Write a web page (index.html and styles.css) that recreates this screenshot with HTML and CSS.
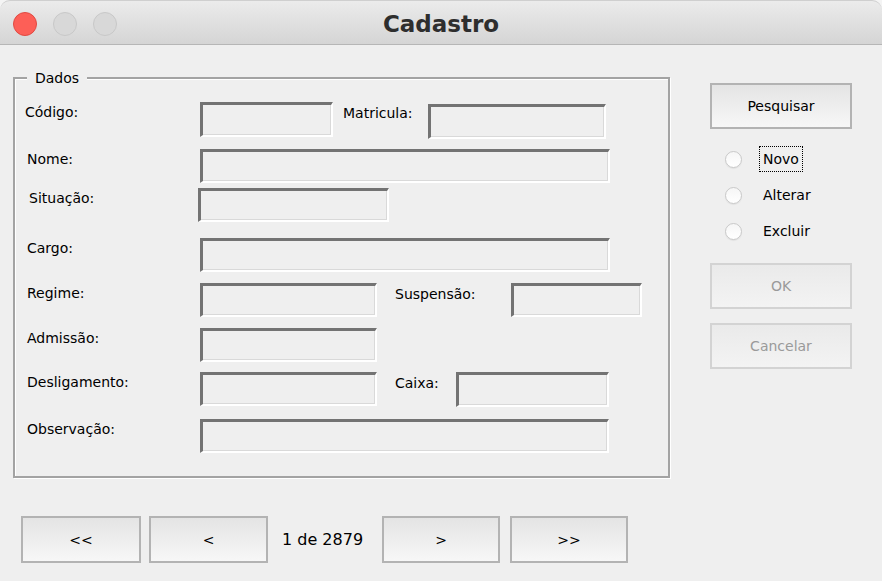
FILE: index.html
```html
<!DOCTYPE html>
<html lang="pt">
<head>
<meta charset="utf-8">
<title>Cadastro</title>
<link rel="stylesheet" href="styles.css">
</head>
<body>
<div class="window">
  <header class="titlebar">
    <div class="lights">
      <span class="light light-close"></span>
      <span class="light"></span>
      <span class="light"></span>
    </div>
    <h1 class="title">Cadastro</h1>
    <div class="spacer"></div>
  </header>

  <main class="content">
    <div class="top">
      <section class="group">
        <span class="legend">Dados</span>
        <div class="form">
          <div class="row">
            <span class="lbl lbl-codigo">Código:</span>
            <span class="field f-codigo tall"></span>
            <span class="lbl-inline l-matricula">Matricula:</span>
            <span class="field f-matricula tall down2"></span>
          </div>
          <div class="row">
            <span class="lbl">Nome:</span>
            <span class="field f-wide"></span>
          </div>
          <div class="row">
            <span class="lbl lbl-situacao">Situação:</span>
            <span class="field f-situacao"></span>
          </div>
          <div class="row">
            <span class="lbl">Cargo:</span>
            <span class="field f-wide"></span>
          </div>
          <div class="row">
            <span class="lbl">Regime:</span>
            <span class="field f-short"></span>
            <span class="lbl-inline l-suspensao">Suspensão:</span>
            <span class="field f-suspensao"></span>
          </div>
          <div class="row">
            <span class="lbl">Admissão:</span>
            <span class="field f-short"></span>
          </div>
          <div class="row">
            <span class="lbl">Desligamento:</span>
            <span class="field f-short"></span>
            <span class="lbl-inline l-caixa">Caixa:</span>
            <span class="field f-caixa tall"></span>
          </div>
          <div class="row">
            <span class="lbl">Observação:</span>
            <span class="field f-obs"></span>
          </div>
        </div>
      </section>

      <aside class="side">
        <div class="btn">Pesquisar</div>
        <div class="radios">
          <div class="radio-row"><span class="radio"></span><span class="radio-label focus">Novo</span></div>
          <div class="radio-row"><span class="radio"></span><span class="radio-label">Alterar</span></div>
          <div class="radio-row"><span class="radio"></span><span class="radio-label">Excluir</span></div>
        </div>
        <div class="btn btn-disabled btn-ok">OK</div>
        <div class="btn btn-disabled btn-cancel">Cancelar</div>
      </aside>
    </div>

    <nav class="pager">
      <div class="btn pbtn p-first">&lt;&lt;</div>
      <div class="btn pbtn p-prev">&lt;</div>
      <span class="count">1 de 2879</span>
      <div class="btn pbtn p-next">&gt;</div>
      <div class="btn pbtn p-last">&gt;&gt;</div>
    </nav>
  </main>
</div>
</body>
</html>
```

FILE: styles.css
```css
html, body {
  margin: 0;
  padding: 0;
  background: #f4f4f4;
}

body {
  width: 882px;
  height: 581px;
  overflow: hidden;
  font-family: "DejaVu Sans", Verdana, sans-serif;
  font-size: 14px;
  color: #000;
}

.window {
  width: 882px;
  height: 581px;
  background: #efefef;
  border-radius: 10px 10px 0 0;
}

/* Title bar */
.titlebar {
  box-sizing: border-box;
  height: 45px;
  padding-top: 2px;
  display: grid;
  grid-template-columns: 1fr auto 1fr;
  align-items: center;
  background: linear-gradient(#ebebeb, #d5d5d5);
  border-top: 1px solid #cfcfcf;
  border-bottom: 1px solid #b6b6b6;
  border-radius: 10px 10px 0 0;
}

.lights {
  display: flex;
  gap: 16px;
  padding-left: 13px;
}

.light {
  box-sizing: border-box;
  width: 24px;
  height: 24px;
  border-radius: 50%;
  background: #d8d8d8;
  border: 1px solid #c8c8c8;
}

.light-close {
  background: #fd5f57;
  border-color: #e04a42;
}

.title {
  margin: 0;
  font-family: "DejaVu Sans", Verdana, sans-serif;
  font-weight: bold;
  font-size: 23px;
  line-height: 28px;
  color: #2e2e2e;
}

/* Content */
.content {
  padding: 32px 0 0 13px;
}

.top {
  display: flex;
  align-items: flex-start;
}

.group {
  box-sizing: border-box;
  width: 657px;
  height: 401px;
  border: 2px solid #a3a3a3;
  box-shadow: 1px 1px 0 #fff, inset 1px 1px 0 #fff;
  display: flex;
  flex-direction: column;
  align-items: flex-start;
}

.legend {
  margin-top: -10px;
  margin-left: 12px;
  padding: 0 8px;
  line-height: 18px;
  background: #efefef;
}

.form {
  margin-top: 15px;
  display: grid;
  grid-template-rows: 47px 39px 50px 45px 45px 44px 47px 35px;
}

.row {
  display: flex;
  align-items: flex-start;
}

.lbl {
  box-sizing: border-box;
  width: 185px;
  padding-left: 12px;
  margin-top: 1px;
  line-height: 18px;
}

.lbl-codigo { padding-left: 10px; }
.lbl-situacao { width: 183px; padding-left: 14px; }

.lbl-inline {
  box-sizing: border-box;
  margin-top: 2px;
  line-height: 18px;
}

.l-matricula { margin-left: 10px; width: 85px; }
.l-suspensao { margin-left: 18px; width: 116px; }
.l-caixa { margin-left: 18px; width: 61px; }

.field {
  display: block;
  box-sizing: border-box;
  height: 34px;
  background: #efefef;
  border-style: solid;
  border-width: 3px 2px 2px 3px;
  border-color: #737373 #fff #fff #737373;
  box-shadow: inset -1px -1px 0 #d9d9d9;
}

.tall { height: 35px; }
.down2 { margin-top: 2px; }

.f-codigo { width: 133px; }
.f-matricula { width: 178px; }
.f-wide { width: 410px; }
.f-situacao { width: 191px; }
.f-short { width: 177px; }
.f-suspensao { width: 131px; }
.f-caixa { width: 153px; }
.f-obs { width: 409px; }

/* Side panel */
.side {
  margin-left: 40px;
  margin-top: 6px;
  width: 142px;
  display: flex;
  flex-direction: column;
}

.btn {
  box-sizing: border-box;
  width: 142px;
  height: 46px;
  border: 2px solid #b3b3b3;
  background: linear-gradient(#e4e4e4, #f7f7f7);
  display: flex;
  align-items: center;
  justify-content: center;
  color: #000;
}

.btn-disabled {
  border-color: #d3d3d3;
  background: linear-gradient(#eaeaea, #f3f3f3);
  color: #9a9a9a;
}

.btn-ok { margin-top: 14px; }
.btn-cancel { margin-top: 14px; }

.radios {
  margin-top: 12px;
}

.radio-row {
  height: 36px;
  display: flex;
  align-items: center;
  padding-left: 15px;
}

.radio {
  box-sizing: border-box;
  width: 17px;
  height: 17px;
  border-radius: 50%;
  border: 1px solid #c9c9c9;
  background: linear-gradient(#f6f6f6, #ffffff);
  box-shadow: 0 1px 1px rgba(0, 0, 0, 0.06);
}

.radio-label {
  margin-left: 17px;
  padding: 3px 3px;
  line-height: 18px;
  border: 1px dotted transparent;
}

.focus {
  border-color: #000;
}

/* Pager */
.pager {
  margin-top: 38px;
  padding-left: 8px;
  display: flex;
  align-items: center;
}

.pbtn {
  height: 47px;
}

.p-first { width: 120px; }
.p-prev { width: 119px; margin-left: 8px; }
.p-next { width: 118px; }
.p-last { width: 118px; margin-left: 10px; }

.count {
  box-sizing: border-box;
  width: 114px;
  padding-left: 14px;
  font-size: 16px;
  line-height: 20px;
}
```
